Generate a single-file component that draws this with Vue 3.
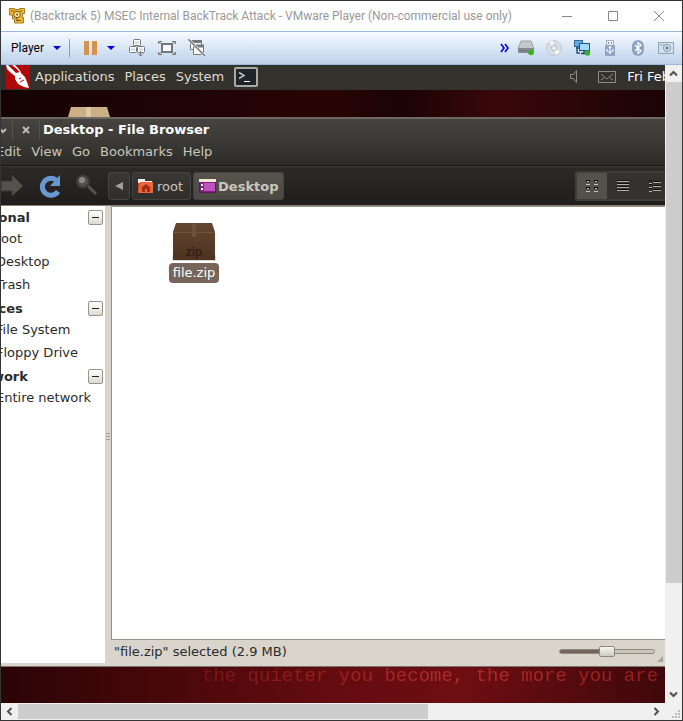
<script setup>
import { ref } from 'vue'

const title = '(Backtrack 5) MSEC Internal BackTrack Attack - VMware Player (Non-commercial use only)'
const zoom = ref(50)
const sections = [
  { name: 'Personal', items: ['root', 'Desktop', 'Trash'] },
  { name: 'Devices', items: ['File System', 'Floppy Drive'] },
  { name: 'Network', items: ['Entire network'] }
]
</script>

<template>
  <div class="window">
    <header class="titlebar">
      <svg class="app-icon" viewBox="0 0 18 18" width="18" height="18" aria-hidden="true">
        <path d="M1.500 1.500h5v1h5v-1h5v5h-2v4h1v5.500h-9v-4h-2v-4h-3z" fill="#f5b52c" stroke="#a27d2c" />
        <rect x="6" y="4.500" width="6" height="6" rx="2" fill="#fbe08a" stroke="#6b5a2a" />
        <circle cx="9" cy="7.500" r="1" fill="#6b5a2a" />
        <path d="M3 4h3M12 4h2M9 10.500v3M8 13.500h5" stroke="#6b5a2a" fill="none" />
      </svg>
      <h1>{{ title }}</h1>
      <div class="win-controls">
        <button aria-label="Minimize"><svg viewBox="0 0 12 12" width="12" height="12"><path d="M1 6.500h10" /></svg></button>
        <button aria-label="Maximize"><svg viewBox="0 0 12 12" width="12" height="12"><path d="M1.500 1.500h9v9h-9z" /></svg></button>
        <button aria-label="Close"><svg viewBox="0 0 12 12" width="12" height="12"><path d="M1 1l10 10M11 1L1 11" /></svg></button>
      </div>
    </header>

    <div class="player-bar">
      <button class="player-menu">Player <i class="tri"></i></button>
      <span class="divider"></span>
      <button aria-label="Suspend"><svg viewBox="0 0 13 14" width="13" height="14"><path d="M0 0h5v14H0zM8 0h5v14H8z" fill="#d8934a" /></svg></button>
      <button class="pause-menu" aria-label="Power options"><i class="tri"></i></button>
      <button class="tool" aria-label="Send Ctrl+Alt+Del">
        <svg viewBox="0 0 18 18" width="18" height="18" fill="#fff" stroke="#75777a">
          <rect x="5.500" y="0.500" width="7" height="6" rx="1" /><rect x="1.500" y="7.500" width="7" height="6" rx="1" /><rect x="9.500" y="7.500" width="7" height="6" rx="1" />
          <path d="M7 3.500h4M3 10.500h4M11 10.500h4" stroke="#c6d8ea" stroke-width="2" /><path d="M12.500 12v5M10 14.500l2.500 2.500 2.500-2.500" fill="none" />
        </svg>
      </button>
      <button class="tool" aria-label="Full screen">
        <svg viewBox="0 0 18 16" width="18" height="16" fill="none" stroke="#75777a">
          <rect x="4" y="4" width="10" height="8" fill="#fff" stroke-width="2" /><path d="M.5 4V1.500H4M14 1.500h3.500V4M17.500 12v2.500H14M4 14.500H.5V12M1 2l3 2M17 2l-3 2M1 14l3-2M17 14l-3-2" />
        </svg>
      </button>
      <button class="tool" aria-label="Unity mode">
        <svg viewBox="0 0 18 18" width="18" height="18" fill="#fff" stroke="#75777a">
          <path d="M2.500 1.500h11v9h-11z" /><path d="M2 2.500h12" stroke-width="3" /><path d="M5.500 6.500h10v9h-10z" /><path d="M5 7h11" stroke-width="3" /><path d="M0 0l17 17" stroke="#e8f0fa" stroke-width="3" /><path d="M0 0l17 17" stroke-width="1.500" />
        </svg>
      </button>
      <div class="devices">
        <button class="more" aria-label="More devices"><svg viewBox="0 0 9 10" width="9" height="10"><path d="M1 1l3 4-3 4M5 1l3 4-3 4" fill="none" stroke="#0000e0" stroke-width="1.600" /></svg></button>
        <button aria-label="Hard disk">
          <svg viewBox="0 0 18 16" width="18" height="16"><path d="M4 1h10l3 8H1z" fill="#c4c7ca" stroke="#9da2a7" /><rect x="1" y="8" width="16" height="5" rx="1" fill="#84898f" /><path d="M3 10.500h8" stroke="#5d6369" stroke-dasharray="1 1" /><circle cx="14" cy="12.500" r="2.800" fill="#3eb01e" /></svg>
        </button>
        <button aria-label="CD/DVD">
          <svg viewBox="0 0 18 18" width="18" height="18"><circle cx="9" cy="9" r="7.500" fill="#d8dde3" stroke="#c4cad2" /><path d="M9 9L4 3l4-1.500zM9 9l6 4-4 3z" fill="#f5f7f9" /><circle cx="9" cy="9" r="2.500" fill="#eef2f6" stroke="#b0b7bf" /></svg>
        </button>
        <button aria-label="Network adapter">
          <svg viewBox="0 0 18 18" width="18" height="18"><rect x="1.500" y="1.500" width="8" height="6" fill="#62abdc" stroke="#36679c" /><path d="M4 8v6h3M3 9h4" stroke="#24528c" fill="none" stroke-width="1.500" /><rect x="6.500" y="4.500" width="10" height="7" fill="#9edafa" stroke="#1e518e" /><path d="M11 12v2M8 14.500h6" stroke="#174477" stroke-width="1.500" /><circle cx="14.500" cy="14" r="2.800" fill="#3eb01e" /></svg>
        </button>
        <button aria-label="USB">
          <svg viewBox="0 0 12 18" width="12" height="18"><rect x="2.500" y="1.500" width="7" height="5" fill="#edf1f5" stroke="#a8b2c0" /><path d="M4 4h1M7 4h1" stroke="#8492a8" stroke-width="2" /><rect x="1" y="6" width="10" height="11" rx="1" fill="#91a4c4" /><path d="M6 15V8M3 10v2l3 1.500L9 12v-2M5 9l1-2 1 2" stroke="#fff" fill="none" /></svg>
        </button>
        <button aria-label="Bluetooth">
          <svg viewBox="0 0 14 16" width="14" height="16"><rect x="1" width="12" height="16" rx="6" fill="#8fa2c4" /><path d="M4 5l6 6-3 2.500v-11L10 5l-6 6" fill="none" stroke="#fff" stroke-width="1.200" /></svg>
        </button>
        <button aria-label="Camera">
          <svg viewBox="0 0 16 12" width="16" height="12"><rect x=".5" y=".5" width="15" height="11" fill="#d3dfe9" stroke="#8fa5b9" /><path d="M2 3h4" stroke="#8fa5b9" /><circle cx="9" cy="6" r="3.500" fill="#e8f0f6" stroke="#7991a8" /><circle cx="9" cy="6" r="1.700" fill="#5f84aa" /></svg>
        </button>
      </div>
    </div>

    <div class="viewport">
      <main class="guest">
        <nav class="panel">
          <svg class="bt-logo" viewBox="0 0 24 24" width="24" height="24" aria-hidden="true">
            <rect width="24" height="24" fill="#b00709" /><path d="M0 0h2l8 8 4-1 5 5 2 5 2 6-5-1-6-3-3-5 0-3-4-3L1 4z" fill="#fff" /><path d="M6 0l6 5 2 3 1-1-3-4-3-3z" fill="#fff" /><path d="M13 14l2-1M14 17l4-2" stroke="#b00709" />
          </svg>
          <a href="#applications">Applications</a>
          <a href="#places">Places</a>
          <a href="#system">System</a>
          <button class="terminal" aria-label="Terminal">
            <svg viewBox="0 0 24 20" width="24" height="20"><rect x="1" y="1" width="22" height="18" rx="1" fill="#20252a" stroke="#a9a9a5" stroke-width="2" /><path d="M5 5.500l5 3-5 3" fill="none" stroke="#b9c0c4" stroke-width="1.500" /><path d="M10 14.500h6" stroke="#fff" /></svg>
          </button>
          <div class="tray">
            <svg viewBox="0 0 8 13" width="8" height="13" fill="none" stroke="#8d8c87"><path d="M.5 4.500h3l3-4v12l-3-4h-3z" /></svg>
            <svg viewBox="0 0 18 12" width="18" height="12" fill="none" stroke="#8d8c87"><path d="M.5.5h17v11H.5zM3 3l6 5 6-5M3 9l3-2M15 9l-3-2" /></svg>
            <time>Fri Feb</time>
          </div>
        </nav>

        <div class="desktop-top">
          <svg viewBox="0 0 42 10" width="42" height="10" aria-hidden="true"><path d="M3 0h36l3 10H0z" fill="#ccb085" /><path d="M18 0h5v10h-5z" fill="#dfc9a8" /></svg>
        </div>

        <section class="browser">
          <div class="browser-title">
            <button class="caption" aria-label="Shade window"><svg viewBox="0 0 8 8" width="8" height="8"><path d="M1 3l3 3 3-3" /></svg></button>
            <button class="caption" aria-label="Close window"><svg viewBox="0 0 8 8" width="8" height="8"><path d="M1 1l6 6M7 1L1 7" /></svg></button>
            <h2>Desktop - File Browser</h2>
          </div>
          <nav class="menubar">
            <a href="#edit">Edit</a><a href="#view">View</a><a href="#go">Go</a><a href="#bookmarks">Bookmarks</a><a href="#help">Help</a>
          </nav>
          <div class="toolbar">
            <button class="nav-tool" aria-label="Forward"><svg viewBox="0 0 24 24" width="24" height="24"><path d="M0 7h11V1l11 11-11 10v-5H0z" fill="#55514d" stroke="#3c3936" /></svg></button>
            <button class="nav-tool" aria-label="Reload"><svg viewBox="0 0 24 24" width="24" height="24"><path d="M20 17.500A8.500 8.500 0 1 1 18 6" fill="none" stroke="#6799d0" stroke-width="5" /><path d="M22 1v11H12z" fill="#6799d0" /></svg></button>
            <button class="nav-tool" aria-label="Search"><svg viewBox="0 0 24 24" width="24" height="24"><path d="M12 11l9 9" stroke="#54524f" stroke-width="3" /><circle cx="8" cy="7.500" r="6" fill="#55534f" stroke="#3d3b38" stroke-width="2" /><circle cx="7" cy="6" r="3" fill="#8b8984" /></svg></button>
            <div class="path">
              <button class="crumb back" aria-label="Show parents"><svg viewBox="0 0 8 8" width="8" height="8"><path d="M8 0v8L0 4z" fill="#a09e98" /></svg></button>
              <button class="crumb">
                <svg viewBox="0 0 17 15" width="17" height="15"><path d="M1 0h7v2h7v10H1z" fill="#f4efe9" /><path d="M1 4h2v9H1z" fill="#c94620" /><path d="M3 3h13v11H1z" fill="#e9673b" /><path d="M9 5l5 4h-1v4h-3v-3H8v3H5V9H4z" fill="#a52d12" /></svg>root
              </button>
              <button class="crumb current">
                <svg viewBox="0 0 17 14" width="17" height="14"><rect x=".5" y=".5" width="16" height="13" fill="#7d237d" stroke="#5e1a60" /><path d="M0 1.500h17" stroke="#eeead5" stroke-width="3" /><rect x="5" y="4" width="11" height="8" fill="#c153c0" /><path d="M2 6h2M2 10h2" stroke="#fff" stroke-width="2" /></svg>Desktop
              </button>
            </div>
            <div class="views">
              <button class="active" aria-label="Icon view"><svg viewBox="0 0 12 12" width="12" height="12"><path d="M0 1h4M8 1h4M0 8h4M8 8h4" stroke="#111" stroke-width="2" /><path d="M1 1.500h2M9 1.500h2M1 8.500h2M9 8.500h2M0 4.500h4M8 4.500h4M0 11.500h4M8 11.500h4" stroke="#c4c1bb" /></svg></button>
              <button aria-label="List view"><svg viewBox="0 0 12 12" width="12" height="12"><path d="M0 .5h12M0 3.500h12M0 6.500h12M0 9.500h12" stroke="#111" /><path d="M0 1.500h12M0 4.500h12M0 7.500h12M0 10.500h12" stroke="#b0aea9" /></svg></button>
              <button aria-label="Compact view"><svg viewBox="0 0 12 12" width="12" height="12"><path d="M0 .5h3M4 1.500h8M0 4.500h3M4 5.500h8M0 8.500h3M4 9.500h8" stroke="#111" /><path d="M0 3.500h3M4 2.500h8M0 7.500h3M4 6.500h8M0 11.500h3M4 10.500h8" stroke="#b0aea9" /></svg></button>
            </div>
          </div>

          <div class="content">
            <aside class="side">
              <section v-for="s in sections" :key="s.name">
                <header><h3>{{ s.name }}</h3><button :aria-label="'Collapse ' + s.name"></button></header>
                <ul><li v-for="i in s.items" :key="i"><a href="#place">{{ i }}</a></li></ul>
              </section>
            </aside>
            <div class="grip"><i></i><i></i><i></i></div>
            <div class="pane">
              <div class="files">
                <figure class="file">
                  <svg viewBox="0 0 44 39" width="44" height="39" aria-hidden="true">
                    <defs><linearGradient id="box" x1="0" y1="0" x2="0" y2="1"><stop offset="0" stop-color="#644731" /><stop offset="1" stop-color="#4c3220" /></linearGradient></defs>
                    <path d="M0 32h44v6H0z" fill="#d9dade" /><path d="M4 0h36l3 9v28H1V9z" fill="url(#box)" /><path d="M1 9.500h42" stroke="#6f533d" /><path d="M20 0h4v14h-4z" fill="#6b5240" />
                    <text x="22" y="33" text-anchor="middle" font-family="Liberation Sans" font-size="12" font-weight="bold" fill="#352014">zip</text>
                  </svg>
                  <figcaption>file.zip</figcaption>
                </figure>
              </div>
              <footer class="status">
                <span>"file.zip" selected (2.9 MB)</span>
                <input v-model="zoom" type="range" min="0" max="100" aria-label="Zoom" />
                <i class="resize"></i>
              </footer>
            </div>
          </div>
        </section>
        <p class="motto"><span>the quieter you become, the more you are able</span></p>
      </main>

      <div class="scroll vertical">
        <button aria-label="Scroll up"><svg viewBox="0 0 9 7" width="9" height="7"><path d="M1 5.500L4.500 2 8 5.500" /></svg></button>
        <div class="track"><div class="thumb"></div></div>
        <button aria-label="Scroll down"><svg viewBox="0 0 9 7" width="9" height="7"><path d="M1 1.500L4.500 5 8 1.500" /></svg></button>
      </div>
      <div class="scroll horizontal">
        <button aria-label="Scroll left"><svg viewBox="0 0 7 9" width="7" height="9"><path d="M5.500 1L2 4.500 5.500 8" /></svg></button>
        <div class="track"><div class="thumb"></div></div>
        <button aria-label="Scroll right"><svg viewBox="0 0 7 9" width="7" height="9"><path d="M1.500 1L5 4.500 1.500 8" /></svg></button>
      </div>
      <div class="corner"><svg viewBox="0 0 8 8" width="8" height="8"><path d="M6 0h2v2H6zM3 3h2v2H3zM6 3h2v2H6zM0 6h2v2H0zM3 6h2v2H3zM6 6h2v2H6z" fill="#bcbcbc" /></svg></div>
    </div>
  </div>
</template>

<style>
body {
  margin: 0;
  overflow: hidden;
}
</style>

<style scoped>
* {
  box-sizing: border-box;
}
h1, h2, h3, p, ul, figure {
  margin: 0;
  padding: 0;
}
button {
  display: flex;
  align-items: center;
  justify-content: center;
  padding: 0;
  border: 0;
  background: none;
  color: inherit;
  font: inherit;
}
a {
  color: inherit;
  text-decoration: none;
}
svg {
  display: block;
  flex: none;
}
.window {
  display: flex;
  flex-direction: column;
  height: 100vh;
  overflow: hidden;
  border: 1px solid #353535;
  background: #fff;
  font-family: "DejaVu Sans", sans-serif;
  font-size: 13px;
  white-space: nowrap;
}
.titlebar {
  display: flex;
  flex: none;
  align-items: center;
  height: 30px;
  padding-left: 7px;
}
.titlebar h1 {
  flex: 1;
  min-width: 0;
  margin-left: 4px;
  overflow: hidden;
  color: #999;
  font: 12px Roboto, sans-serif;
}
.win-controls {
  display: flex;
}
.win-controls button {
  width: 46px;
  height: 28px;
}
.win-controls path {
  fill: none;
  stroke: #888;
}
.player-bar {
  display: flex;
  flex: none;
  align-items: center;
  height: 34px;
  padding: 0 7px 0 10px;
  border: 1px solid #98bbdd;
  border-width: 1px 0;
  background: linear-gradient(#f7faff, #dce8f6 45%, #bdd2ea);
  font: 12px Roboto, sans-serif;
}
.tri {
  width: 0;
  border: 4px solid transparent;
  border-top-color: #0000e0;
  border-bottom: 0;
}
.player-menu {
  gap: 9px;
}
.divider {
  width: 1px;
  height: 18px;
  margin: 0 14px 0 8px;
  background: #7ba0c8;
}
.pause-menu {
  margin: 0 13px 0 10px;
}
.tool {
  margin-right: 12px;
}
.devices {
  display: flex;
  flex: 1;
  align-items: center;
  justify-content: flex-end;
  gap: 10px;
}
.devices button {
  width: 18px;
}
.devices .more {
  width: 9px;
  margin-right: -2px;
}
.viewport {
  display: grid;
  flex: 1;
  grid-template: minmax(0, 1fr) 17px / minmax(0, 1fr) 17px;
  min-height: 0;
}
.guest {
  display: flex;
  flex-direction: column;
  overflow: hidden;
  background: #2b0507;
}
.panel {
  display: flex;
  flex: none;
  align-items: center;
  gap: 10px;
  height: 25px;
  padding: 0 0 2px 5px;
  background: #34322d;
  color: #dfdbd2;
}
.bt-logo {
  margin-right: -5px;
}
.tray {
  display: flex;
  flex: 1;
  align-items: center;
  justify-content: flex-end;
  gap: 20px;
  min-width: 0;
  margin-right: -5px;
}
.tray time {
  margin-left: -9px;
  color: #fff;
}
.desktop-top {
  display: flex;
  flex: none;
  align-items: flex-end;
  height: 27px;
  padding-left: 67px;
  background: linear-gradient(90deg, #150304, #290406 50%, #1b0405 60%, #3a070a 75%, #1b0405);
}
.browser {
  display: flex;
  flex: 1;
  flex-direction: column;
  min-height: 0;
  margin: 0 -8px 0 -7px;
  border-top: 2px solid #6f6862;
  border-bottom: 1px solid #77746d;
  background: #d9d5cd;
  color: #2b2b2b;
}
.browser-title {
  display: flex;
  flex: none;
  align-items: center;
  height: 21px;
  background: linear-gradient(#44433f, #3c3b37);
  color: #fff;
}
.browser-title h2 {
  margin-left: 3px;
  font-size: 13px;
}
.caption {
  width: 19px;
  height: 18px;
  border-right: 1px solid #55534e;
}
.caption + .caption {
  width: 27px;
}
.caption path {
  fill: none;
  stroke: #bdbab3;
  stroke-width: 2;
}
.menubar {
  display: flex;
  flex: none;
  align-items: center;
  gap: 10px;
  height: 26px;
  padding: 0 0 2px 2px;
  background: linear-gradient(#3b3a36, #2c2b28);
  border-bottom: 1px solid #171614;
  color: #c9c6be;
}
.toolbar {
  display: flex;
  flex: none;
  align-items: center;
  height: 40px;
  border-top: 1px solid #3b3a36;
  border-bottom: 1px solid #8b7b6d;
  background: linear-gradient(#2b2a27, #1f1e1c);
  color: #c9c6be;
}
.nav-tool {
  margin: 0 6px 0 7px;
}
.path {
  display: flex;
  gap: 2px;
  margin-left: 3px;
}
.crumb {
  gap: 3px;
  height: 28px;
  padding: 0 7px 0 4px;
  border: 1px solid #464440;
  border-radius: 3px;
  background: linear-gradient(#393733, #302f2c);
}
.crumb.back {
  width: 22px;
  padding: 0;
}
.crumb.current {
  gap: 2px;
  padding: 0 4px 0 5px;
  background: linear-gradient(#55534c, #4b4943);
  font-weight: bold;
}
.views {
  display: flex;
  margin-left: auto;
  border: 2px solid #3e3d38;
}
.views button {
  width: 32px;
  height: 26px;
  background: #33322e;
}
.views .active {
  width: 30px;
  background: #54514a;
}
.content {
  display: flex;
  flex: 1;
  min-height: 0;
}
.side {
  width: 111px;
  margin-bottom: 3px;
  background: #fff;
}
.side header {
  display: flex;
  align-items: center;
  justify-content: space-between;
  height: 22px;
  padding-right: 2px;
}
.side h3 {
  margin-left: -28px;
  font-size: 13px;
}
.side header button {
  width: 15px;
  height: 15px;
  border: 1px solid #9a958c;
  border-radius: 2px;
  background: linear-gradient(#fff, #dedad3);
}
.side header button::after {
  width: 7px;
  height: 1px;
  background: #222;
  content: "";
}
.side ul {
  padding-left: 2px;
  list-style: none;
}
.side li {
  height: 23px;
  line-height: 22px;
}
.grip {
  display: flex;
  flex-direction: column;
  align-items: center;
  justify-content: center;
  gap: 2px;
  width: 6px;
}
.grip i {
  width: 4px;
  height: 1px;
  background: #a39e94;
}
.pane {
  display: flex;
  flex: 1;
  flex-direction: column;
  min-width: 0;
}
.files {
  flex: 1;
  padding: 16px 0 0 57px;
  border: 1px solid #96918a;
  border-width: 1px 0 1px 1px;
  background: #fff;
}
.file {
  display: flex;
  flex-direction: column;
  align-items: center;
  width: 50px;
}
.file figcaption {
  height: 20px;
  margin-top: 1px;
  padding: 0 4px;
  border-radius: 4px;
  background: #77645a;
  color: #fff;
  line-height: 19px;
}
.status {
  display: flex;
  flex: none;
  align-items: center;
  height: 26px;
  padding: 0 10px 4px 3px;
}
.status span {
  flex: 1;
}
.status input {
  width: 96px;
  height: 14px;
  margin: 0;
  appearance: none;
  background: none;
}
.status input::-webkit-slider-runnable-track {
  height: 5px;
  border: 1px solid #8d897e;
  border-radius: 3px;
  background: linear-gradient(90deg, #76635a 50%, #c9c5b7 50%);
}
.status input::-webkit-slider-thumb {
  width: 16px;
  height: 11px;
  margin-top: -4px;
  appearance: none;
  border: 1px solid #8d897e;
  border-radius: 2px;
  background: linear-gradient(#f7f5f2, #cfcbc3);
}
.resize {
  align-self: flex-end;
  margin-left: 2px;
  border: 3px solid #aaa498;
  border-color: transparent #aaa498 #aaa498 transparent;
}
.motto {
  flex: none;
  height: 36px;
  padding-left: 201px;
  background: linear-gradient(90deg, #2b0406, #430709 20%, #650c10 50%, #6d0e12 70%, #3f080b);
  font: 19px/18px "Liberation Mono", monospace;
}
.motto span {
  background: linear-gradient(90deg, #7a1416, #b52a2a 50%, #8a1a1c);
  background-clip: text;
  color: transparent;
}
.scroll {
  display: flex;
  background: #f0f0f0;
}
.vertical {
  flex-direction: column;
}
.scroll button {
  flex: none;
  width: 17px;
  height: 17px;
}
.scroll path {
  fill: none;
  stroke: #505050;
  stroke-width: 2;
}
.track {
  flex: 1;
}
.thumb {
  background: #cdcdcd;
}
.vertical .thumb {
  height: 83%;
  margin-left: 1px;
}
.horizontal .thumb {
  width: 65%;
  height: 15px;
  margin-top: 1px;
}
.corner {
  display: flex;
  align-items: flex-end;
  justify-content: flex-end;
  padding: 2px;
  background: #f0f0f0;
}
</style>
